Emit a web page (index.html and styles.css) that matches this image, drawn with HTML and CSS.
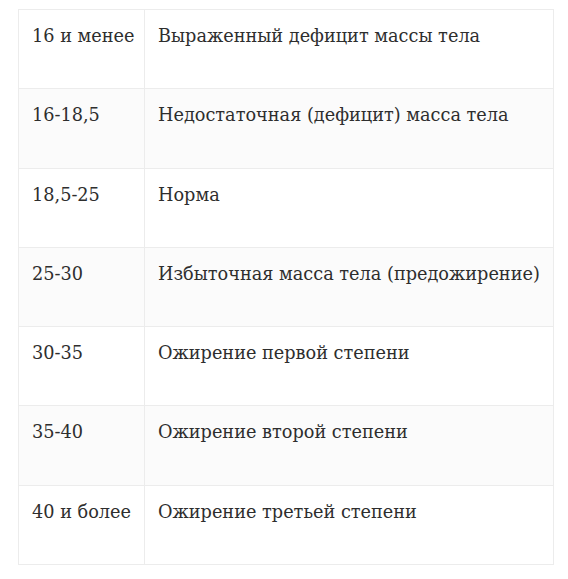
FILE: index.html
```html
<!DOCTYPE html>
<html lang="ru">
<head>
<meta charset="utf-8">
<link rel="stylesheet" href="styles.css">
</head>
<body>
<table class="bmi">
<colgroup><col class="c1"><col class="c2"></colgroup>
<tbody>
<tr><td>16 и менее</td><td>Выраженный дефицит массы тела</td></tr>
<tr><td>16-18,5</td><td>Недостаточная (дефицит) масса тела</td></tr>
<tr><td>18,5-25</td><td>Норма</td></tr>
<tr><td>25-30</td><td>Избыточная масса тела (предожирение)</td></tr>
<tr><td>30-35</td><td>Ожирение первой степени</td></tr>
<tr><td>35-40</td><td>Ожирение второй степени</td></tr>
<tr><td>40 и более</td><td>Ожирение третьей степени</td></tr>
</tbody>
</table>
</body>
</html>
```
FILE: styles.css
```css
html, body {
  margin: 0;
  padding: 0;
  background: #fff;
}
body {
  padding: 9px 0 0 18px;
}
.bmi {
  border-collapse: collapse;
  table-layout: fixed;
  width: 536px;
  font-family: "DejaVu Serif", serif;
  font-size: 17.7px;
  color: #2e2e2e;
}
.bmi col.c1 {
  width: 126px;
}
.bmi td {
  border: 1px solid #ececec;
  height: 79.3px;
  box-sizing: border-box;
  padding: 14px 0 14px 13px;
  vertical-align: top;
  line-height: 25px;
  white-space: nowrap;
  overflow: visible;
}
.bmi tr:nth-child(even) td {
  background: #fbfbfb;
}
```
